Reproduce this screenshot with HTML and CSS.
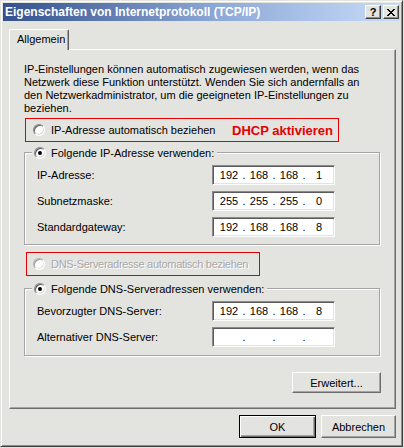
FILE: index.html
```html
<!DOCTYPE html>
<html lang="de">
<head>
<meta charset="utf-8">
<title>Eigenschaften von Internetprotokoll (TCP/IP)</title>
<link rel="stylesheet" href="styles.css">
</head>
<body>
<div class="window">
  <div class="titlebar">
    <span class="title">Eigenschaften von Internetprotokoll (TCP/IP)</span>
    <div class="caption-btns">
      <span class="cbtn">?</span>
      <span class="cbtn"><svg width="8" height="7" viewBox="0 0 8 7"><path d="M0 0h2v1H0zM6 0h2v1H6zM1 1h2v1H1zM5 1h2v1H5zM2 2h4v1H2zM3 3h2v1H3zM2 4h4v1H2zM1 5h2v1H1zM5 5h2v1H5zM0 6h2v1H0zM6 6h2v1H6z" fill="#000"/></svg></span>
    </div>
  </div>
  <div class="client">
    <div class="tabs"><div class="tab">Allgemein</div></div>
    <div class="panel">
      <p class="intro">IP-Einstellungen können automatisch zugewiesen werden, wenn das<br>Netzwerk diese Funktion unterstützt. Wenden Sie sich andernfalls an<br>den Netzwerkadministrator, um die geeigneten IP-Einstellungen zu<br>beziehen.</p>
      <div class="redbox r1">
        <span class="opt"><span class="radio"></span>IP-Adresse automatisch beziehen</span>
        <span class="dhcp">DHCP aktivieren</span>
      </div>
      <div class="group g1">
        <div class="legend"><span class="radio on"></span>Folgende IP-Adresse verwenden:</div>
        <div class="row"><span class="lbl">IP-Adresse:</span><div class="field"><span>192</span><span>.</span><span>168</span><span>.</span><span>168</span><span>.</span><span>1</span></div></div>
        <div class="row"><span class="lbl">Subnetzmaske:</span><div class="field"><span>255</span><span>.</span><span>255</span><span>.</span><span>255</span><span>.</span><span>0</span></div></div>
        <div class="row"><span class="lbl">Standardgateway:</span><div class="field"><span>192</span><span>.</span><span>168</span><span>.</span><span>168</span><span>.</span><span>8</span></div></div>
      </div>
      <div class="redbox r2">
        <span class="opt disabled"><span class="radio dis"></span>DNS-Serveradresse automatisch beziehen</span>
      </div>
      <div class="group g2">
        <div class="legend"><span class="radio on"></span>Folgende DNS-Serveradressen verwenden:</div>
        <div class="row"><span class="lbl">Bevorzugter DNS-Server:</span><div class="field"><span>192</span><span>.</span><span>168</span><span>.</span><span>168</span><span>.</span><span>8</span></div></div>
        <div class="row"><span class="lbl">Alternativer DNS-Server:</span><div class="field"><span></span><span>.</span><span></span><span>.</span><span></span><span>.</span><span></span></div></div>
      </div>
      <div class="adv"><button class="btn erw">Erweitert...</button></div>
    </div>
    <div class="footer">
      <button class="btn ok">OK</button>
      <button class="btn cancel">Abbrechen</button>
    </div>
  </div>
</div>
</body>
</html>
```
FILE: styles.css
```css
html, body {
  margin: 0;
  padding: 0;
  background: #e3e3df;
}
body {
  font-family: "Liberation Sans", Arial, sans-serif;
  font-size: 11px;
  color: #000;
}
.window {
  width: 403px;
  height: 447px;
  box-sizing: border-box;
  border: 1px solid;
  border-color: #e3e3df #404040 #404040 #e3e3df;
  box-shadow: inset 1px 1px 0 #fff, inset -1px -1px 0 #8c8a8c;
  padding: 2px;
  display: flex;
  flex-direction: column;
  background: #e3e3df;
}
.titlebar {
  height: 18px;
  flex: none;
  display: flex;
  align-items: center;
  background: linear-gradient(90deg, #34508e 0%, #8eaad8 55%, #c8dcf8 100%);
  color: #fff;
  font-weight: bold;
  font-size: 12px;
  padding-left: 2px;
}
.title {
  flex: 1;
  white-space: nowrap;
}
.caption-btns {
  display: flex;
  gap: 2px;
  margin-right: 1px;
}
.cbtn {
  width: 16px;
  height: 14px;
  box-sizing: border-box;
  background: #e3e3df;
  border: 1px solid;
  border-color: #fff #404040 #404040 #fff;
  box-shadow: inset -1px -1px 0 #8c8a8c;
  display: flex;
  align-items: center;
  justify-content: center;
  color: #000;
  font-weight: bold;
  font-size: 11px;
  line-height: 12px;
}
.client {
  padding: 8px 4px 0 6px;
}
.tabs {
  display: flex;
}
.tab {
  width: 60px;
  height: 21px;
  box-sizing: border-box;
  margin-bottom: -1px;
  position: relative;
  z-index: 1;
  background: #e3e3df;
  border-top: 1px solid #fff;
  border-left: 1px solid #fff;
  border-right: 1px solid #5c5a5c;
  box-shadow: inset -1px 0 0 #a6a2a6;
  border-radius: 2px 2px 0 0;
  padding-left: 7px;
  line-height: 18px;
}
.panel {
  height: 360px;
  box-sizing: border-box;
  border-top: 1px solid #fff;
  border-left: 1px solid #fff;
  border-right: 1px solid #6f6d6f;
  border-bottom: 1px solid #6f6d6f;
  box-shadow: inset -1px -1px 0 #a6a2a6;
  padding: 13px 0 0 14px;
}
.intro {
  margin: 0;
  line-height: 13px;
  white-space: nowrap;
}
.redbox {
  border: 1px solid #e40000;
  display: flex;
  align-items: center;
  box-sizing: border-box;
  height: 24px;
}
.r1 {
  width: 314px;
  margin: 3px 0 0 1px;
  padding: 0 5px 0 7px;
}
.r2 {
  width: 234px;
  margin: 7px 0 0 2px;
  padding-left: 6px;
}
.opt {
  display: flex;
  align-items: center;
  gap: 6px;
  white-space: nowrap;
}
.dhcp {
  margin-left: auto;
  color: #e40000;
  font-weight: bold;
  font-size: 13px;
  white-space: nowrap;
}
.disabled {
  color: #a9a7a9;
  text-shadow: 1px 1px 0 #fff;
  letter-spacing: -0.3px;
}
.radio {
  width: 12px;
  height: 12px;
  box-sizing: border-box;
  border-radius: 50%;
  border: 1px solid;
  border-color: #8c8a8c #fff #fff #8c8a8c;
  box-shadow: inset 1px 1px 0 #5c5a5c, inset -1px -1px 0 #d8d6d8;
  background: #fff;
  flex: none;
  position: relative;
}
.radio.dis {
  border-color: #b4b2b4 #fff #fff #b4b2b4;
  box-shadow: inset 1px 1px 0 #9c9a9c, inset -1px -1px 0 #e3e3df;
}
.radio.on::after {
  content: "";
  position: absolute;
  left: 3px;
  top: 3px;
  width: 4px;
  height: 4px;
  border-radius: 50%;
  background: #000;
}
.group {
  position: relative;
  width: 356px;
  box-sizing: border-box;
  border: 1px solid #a6a2a6;
  box-shadow: inset 1px 1px 0 #fff, 1px 1px 0 #fff;
  display: flex;
  flex-direction: column;
  gap: 6px;
}
.g1 {
  margin-top: 10px;
  padding: 12px 0 7px 12px;
}
.g2 {
  margin-top: 12px;
  padding: 12px 0 8px 12px;
}
.legend {
  position: absolute;
  top: -7px;
  left: 7px;
  height: 13px;
  padding: 0 3px 0 2px;
  background: #e3e3df;
  display: flex;
  align-items: center;
  gap: 5px;
  white-space: nowrap;
}
.row {
  display: flex;
  align-items: center;
  height: 20px;
}
.lbl {
  width: 175px;
  flex: none;
  white-space: nowrap;
}
.field {
  width: 123px;
  height: 20px;
  box-sizing: border-box;
  background: #fff;
  border: 1px solid;
  border-color: #8c8a8c #fff #fff #8c8a8c;
  box-shadow: inset 1px 1px 0 #5c5a5c, inset -1px -1px 0 #e3e3df;
  display: grid;
  grid-template-columns: 26px 4px 26px 4px 26px 4px 26px;
  padding-left: 3px;
  align-items: center;
  line-height: 18px;
  text-align: center;
}
.adv {
  margin-top: 16px;
  width: 357px;
  display: flex;
  justify-content: flex-end;
}
.btn {
  height: 23px;
  box-sizing: border-box;
  background: #e3e3df;
  font: inherit;
  color: #000;
  border: 1px solid;
  border-color: #fff #6f6d6f #6f6d6f #fff;
  box-shadow: inset -1px -1px 0 #a6a2a6;
  padding: 0;
  margin: 0;
}
.erw {
  width: 89px;
  height: 21px;
}
.footer {
  display: flex;
  justify-content: flex-end;
  gap: 5px;
  margin-top: 6px;
}
.ok {
  width: 77px;
  border-color: #000;
  box-shadow: inset 1px 1px 0 #fff, inset -1px -1px 0 #6f6d6f, inset -2px -2px 0 #a6a2a6;
}
.cancel {
  width: 75px;
}
```
